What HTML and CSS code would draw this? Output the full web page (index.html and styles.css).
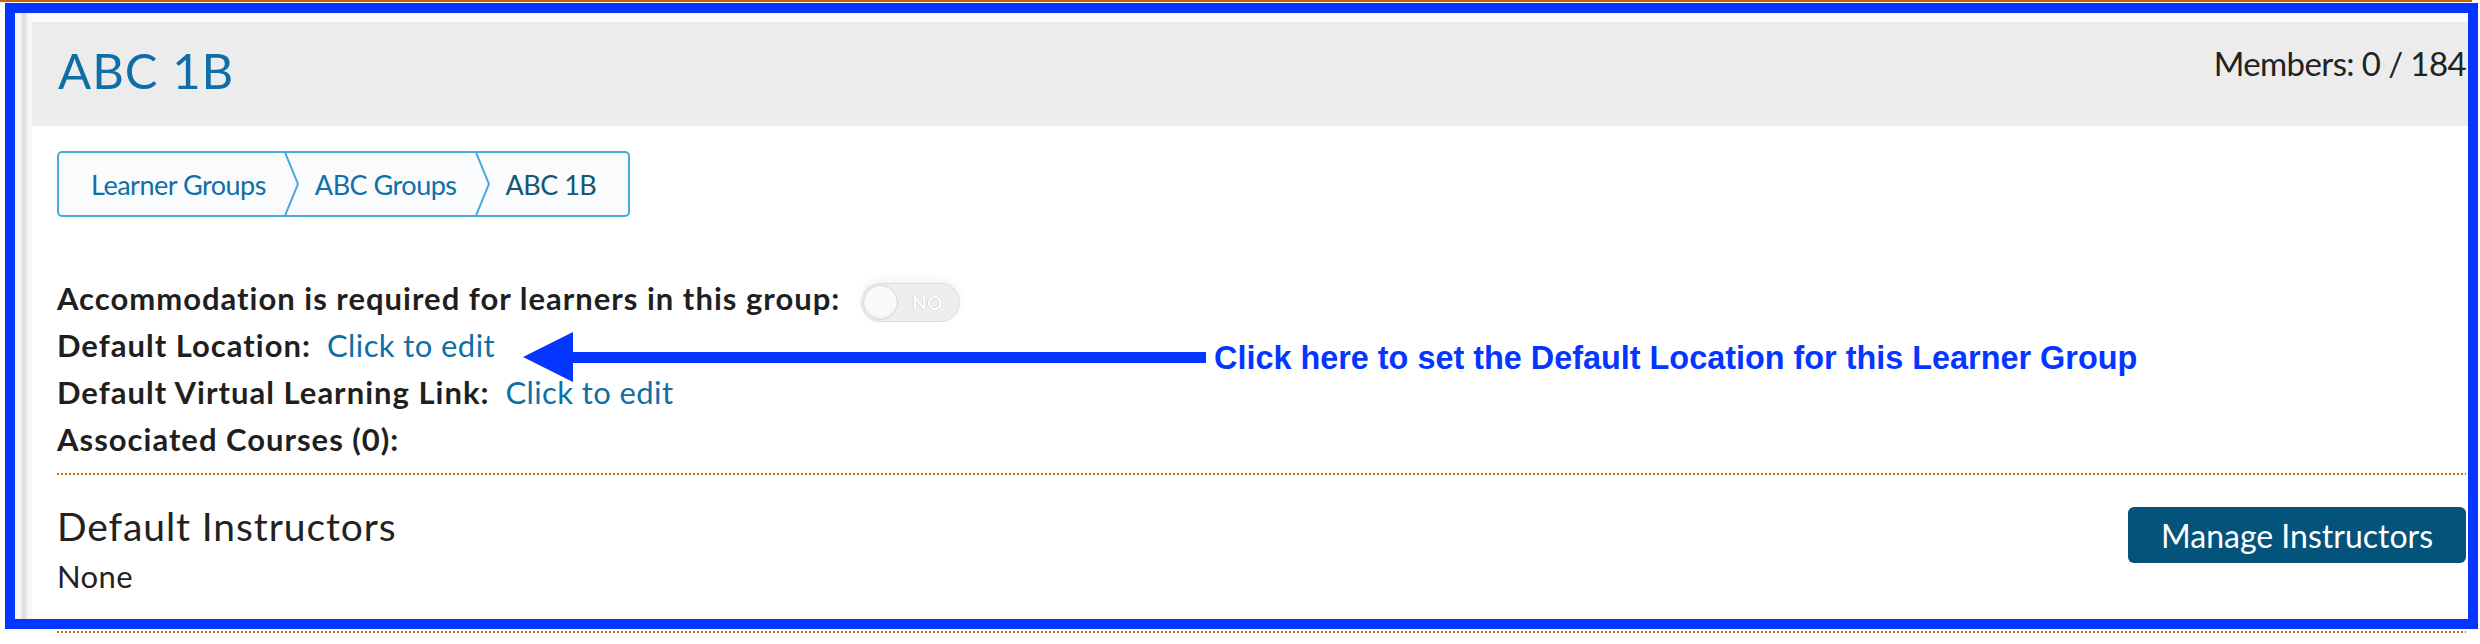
FILE: index.html
```html
<!DOCTYPE html>
<html lang="en">
<head>
<meta charset="utf-8">
<title>ABC 1B</title>
<link rel="stylesheet" href="styles.css">
</head>
<body>
<div class="topline"></div>
<div class="page">
  <div class="frame">
    <div class="inner">
      <header class="head">
        <h1 class="title">ABC 1B</h1>
        <div class="members">Members: 0 / 184</div>
      </header>
      <div class="content">
        <nav class="crumbs">
          <a class="crumb">Learner Groups</a>
          <svg class="sep" viewBox="0 0 16 66" width="16" height="66"><polyline points="1,-1 15,33 1,67" fill="none" stroke="#4ba9dc" stroke-width="2"/></svg>
          <a class="crumb">ABC Groups</a>
          <svg class="sep" viewBox="0 0 16 66" width="16" height="66"><polyline points="1,-1 15,33 1,67" fill="none" stroke="#4ba9dc" stroke-width="2"/></svg>
          <span class="crumb current">ABC 1B</span>
        </nav>
        <div class="details">
          <div class="row"><span class="label">Accommodation is required for learners in this group:</span><span class="toggle"><span class="knob"></span><span class="toggle-text">NO</span></span></div>
          <div class="row"><span class="label">Default Location:</span><a class="edit">Click to edit</a></div>
          <div class="row"><span class="label">Default Virtual Learning Link:</span><a class="edit">Click to edit</a></div>
          <div class="row"><span class="label">Associated Courses (0):</span></div>
        </div>
        <div class="instructors">
          <div class="inst-info">
            <h2 class="inst-title">Default Instructors</h2>
            <div class="none">None</div>
          </div>
          <button class="manage">Manage Instructors</button>
        </div>
      </div>
    </div>
  </div>
  <div class="below"></div>
  <div class="annotation">
    <svg class="arrow" viewBox="0 0 683 50" width="683" height="50"><polygon points="0,25 50,0 50,50" fill="#0536ff"/><rect x="49" y="20" width="634" height="11" fill="#0536ff"/></svg>
    <div class="note">Click here to set the Default Location for this Learner Group</div>
  </div>
</div>
</body>
</html>
```
FILE: styles.css
```css
html, body {
  margin: 0;
  padding: 0;
  background: #ffffff;
}
body {
  width: 2480px;
  height: 644px;
  overflow: hidden;
  font-family: "Lato", "Noto Sans", sans-serif;
  color: #222222;
}
.topline {
  height: 2px;
  width: 2472px;
  background: #c86408;
}
.page {
  position: relative;
}
.frame {
  margin-top: 1px;
  margin-left: 5px;
  width: 2473px;
  height: 626px;
  box-sizing: border-box;
  border: 10px solid #0536ff;
  overflow: hidden;
}
.inner {
  height: 100%;
  padding: 9px 0 0 17px;
  box-sizing: border-box;
  background:
    linear-gradient(to right, #f7f7f7 0, #f7f7f7 5px, #e6e6e6 7px, #dcdcdc 9px, #e8e8e8 11px, #f7f7f7 13px, #f9f9f9 17px, transparent 17px),
    #fbfbfb;
}
.head {
  height: 104px;
  background: #ececec;
  display: flex;
  justify-content: space-between;
  align-items: flex-start;
  padding: 0 2px 0 26px;
}
.title {
  margin: 24px 0 0 0;
  font-size: 49px;
  line-height: 49px;
  font-weight: 400;
  letter-spacing: 1px;
  color: #0e6ea8;
}
.members {
  margin-top: 21px;
  font-size: 33px;
  line-height: 40px;
  letter-spacing: -0.6px;
  color: #222222;
}
.content {
  background: #ffffff;
  height: 500px;
  padding: 25px 2px 0 25px;
  box-sizing: border-box;
}
.crumbs {
  display: inline-flex;
  align-items: center;
  height: 66px;
  box-sizing: border-box;
  border: 2px solid #4ba9dc;
  border-radius: 5px;
  background: #fafbfc;
  padding: 0 32px;
  gap: 16px;
  overflow: hidden;
}
.sep {
  flex: none;
  display: block;
  margin-left: 1px;
}
.crumb {
  font-size: 27px;
  letter-spacing: -0.5px;
  color: #106ea8;
  text-decoration: none;
}
.crumb.current {
  color: #145574;
}
.details {
  margin-top: 58px;
}
.row {
  font-size: 31px;
  line-height: 47px;
  height: 47px;
  white-space: nowrap;
}
.label {
  font-weight: 700;
  letter-spacing: 1px;
  color: #1f1f1f;
}
.edit {
  margin-left: 16px;
  letter-spacing: 0.4px;
  color: #0f6fa5;
}
.toggle {
  display: inline-block;
  position: relative;
  vertical-align: middle;
  margin-left: 21px;
  width: 99px;
  height: 39px;
  box-sizing: border-box;
  border-radius: 20px;
  background: #eeeeee;
  border: 1px solid #dddddd;
  box-shadow: 0 -3px 8px rgba(0, 0, 0, 0.06);
}
.knob {
  position: absolute;
  left: 1px;
  top: 1px;
  width: 35px;
  height: 35px;
  box-sizing: border-box;
  border-radius: 50%;
  background: #fafafa;
  border: 1px solid #d6d6d6;
  box-shadow: inset 0 -2px 3px rgba(0, 0, 0, 0.06);
}
.toggle-text {
  position: absolute;
  left: 50px;
  top: 0;
  line-height: 37px;
  font-size: 19px;
  font-weight: 700;
  letter-spacing: 0;
  color: #ffffff;
  text-shadow: 0 0 1px #9a9a9a;
}
.instructors {
  margin-top: 10px;
  padding-top: 2px;
  background: repeating-linear-gradient(to right, #d06a0e 0, #d06a0e 2px, transparent 2px, transparent 4px) top left / 100% 2px no-repeat;
  display: flex;
  justify-content: space-between;
  align-items: flex-start;
}
.inst-title {
  margin: 28px 0 0 0;
  font-size: 39px;
  line-height: 46px;
  font-weight: 400;
  letter-spacing: 0.9px;
  color: #222222;
}
.none {
  margin-top: 9px;
  font-size: 31px;
  line-height: 36px;
  letter-spacing: 0.4px;
  color: #222222;
}
.manage {
  margin-top: 32px;
  width: 338px;
  height: 56px;
  border: none;
  border-radius: 6px;
  background: #03537a;
  color: #ffffff;
  font-family: "Lato", "Noto Sans", sans-serif;
  font-size: 32px;
  padding: 0;
}
.below {
  margin: 2px 14px 0 57px;
  height: 2px;
  background: repeating-linear-gradient(to right, #d06a0e 0, #d06a0e 2px, transparent 2px, transparent 4px);
}
.annotation {
  position: absolute;
  left: 0;
  top: 0;
}
.arrow {
  position: absolute;
  left: 523px;
  top: 329px;
  display: block;
}
.note {
  position: absolute;
  left: 1214px;
  top: 339px;
  white-space: nowrap;
  font-family: "Liberation Sans", Arial, sans-serif;
  font-weight: 700;
  font-size: 32.4px;
  line-height: 32px;
  color: #0536ff;
}
```
